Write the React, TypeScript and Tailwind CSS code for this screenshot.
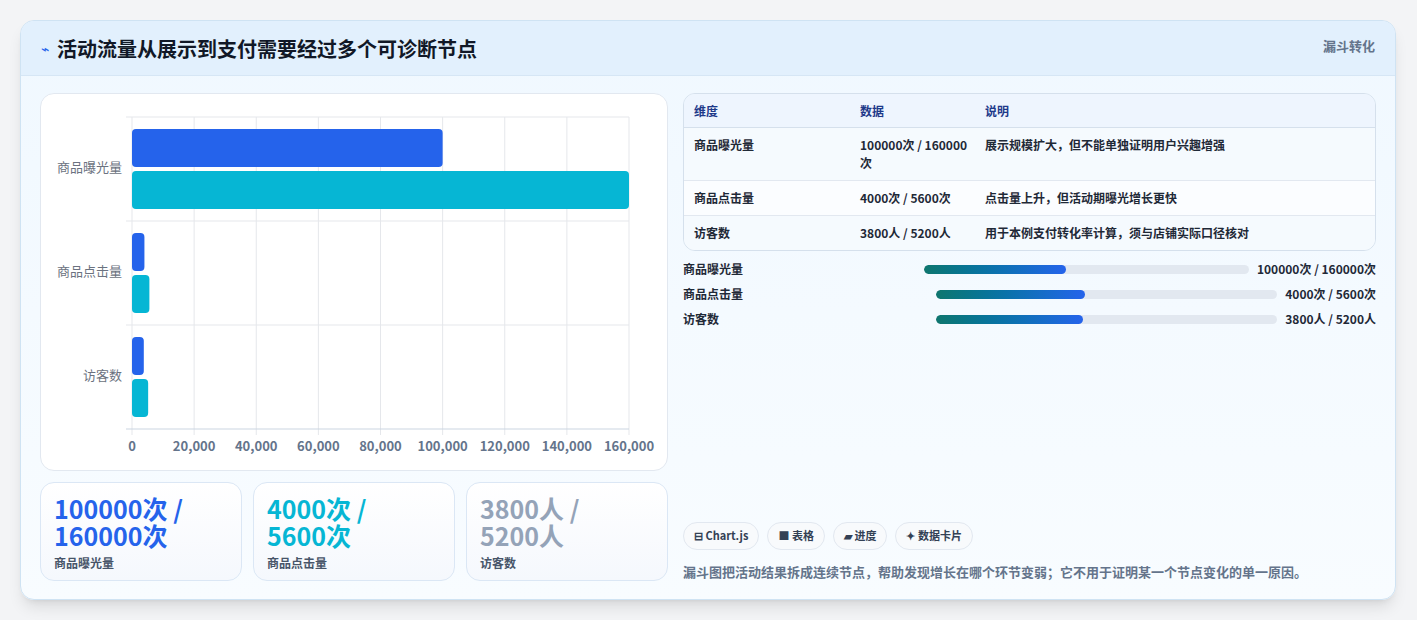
import React from "react";

const F = { fontFamily: '"Noto Sans CJK SC","Noto Sans",sans-serif' };

function Chart() {
  const x0 = 91, w = 497, y0 = 23, h = 312;
  const sx = (v: number) => (v / 160000) * w;
  const cats = [
    { n: "商品曝光量", a: 100000, b: 160000 },
    { n: "商品点击量", a: 4000, b: 5600 },
    { n: "访客数", a: 3800, b: 5200 },
  ];
  const ticks = [0, 20000, 40000, 60000, 80000, 100000, 120000, 140000, 160000];
  return (
    <svg width="627" height="377" className="block">
      {ticks.map((t) => (
        <line key={t} x1={x0 + sx(t)} x2={x0 + sx(t)} y1={y0} y2={y0 + h + 6} stroke="#e5e7eb" />
      ))}
      {[0, 1, 2, 3].map((i) => (
        <line key={i} x1={x0 - 6} x2={x0 + w} y1={y0 + i * 104} y2={y0 + i * 104} stroke={i === 3 ? "#cbd5e1" : "#e5e7eb"} />
      ))}
      {cats.map((c, i) => {
        const top = y0 + i * 104;
        return (
          <g key={c.n}>
            <rect x={x0} y={top + 12} width={sx(c.a)} height={38} rx={4} fill="#2563eb" />
            <rect x={x0} y={top + 54} width={sx(c.b)} height={38} rx={4} fill="#06b6d4" />
            <text x={x0 - 10} y={top + 55} textAnchor="end" fontSize="13" fill="#6b7280" style={F}>{c.n}</text>
          </g>
        );
      })}
      {ticks.map((t) => (
        <text key={t} x={x0 + sx(t)} y={357} textAnchor="middle" fontSize="13" fontWeight="600" fill="#64748b" style={F}>
          {t.toLocaleString("en-US")}
        </text>
      ))}
    </svg>
  );
}

const stats = [
  { v1: "100000次 /", v2: "160000次", l: "商品曝光量", c: "text-[#2563eb]" },
  { v1: "4000次 /", v2: "5600次", l: "商品点击量", c: "text-[#06b6d4]" },
  { v1: "3800人 /", v2: "5200人", l: "访客数", c: "text-[#94a3b8]" },
];

const rows = [
  ["商品曝光量", "100000次 / 160000次", "展示规模扩大，但不能单独证明用户兴趣增强"],
  ["商品点击量", "4000次 / 5600次", "点击量上升，但活动期曝光增长更快"],
  ["访客数", "3800人 / 5200人", "用于本例支付转化率计算，须与店铺实际口径核对"],
];

const bars = [
  ["商品曝光量", "100000次 / 160000次", "43.5%"],
  ["商品点击量", "4000次 / 5600次", "43.5%"],
  ["访客数", "3800人 / 5200人", "43%"],
];

export default function App() {
  return (
    <div className="w-[1417px] h-[620px] bg-[#f3f4f6] p-[20px] pr-[21px]" style={F}>
      <div className="h-[580px] rounded-[14px] border border-[#cfe3f3] bg-gradient-to-b from-[#f0f8ff] to-[#f8fcff] overflow-hidden shadow-lg flex flex-col">
        <div className="h-[55px] shrink-0 bg-[#e2f0fd] border-b border-[#d6e6f5] flex items-start justify-between px-[20px]">
          <div className="flex items-center gap-[8px] h-[55px]">
            <span className="text-[#2563eb] text-[14px]">⌁</span>
            <span className="text-[20px] font-bold text-[#111827]">活动流量从展示到支付需要经过多个可诊断节点</span>
          </div>
          <span className="text-[13px] font-bold text-[#64748b] mt-[15px]">漏斗转化</span>
        </div>
        <div className="flex-1 flex gap-[15px] px-[19px] pt-[17px] pb-[18px]">
          <div className="w-[628px] flex flex-col gap-[11px]">
            <div className="h-[378px] rounded-[14px] border border-[#e2e8f0] bg-white overflow-hidden">
              <Chart />
            </div>
            <div className="flex-1 grid grid-cols-3 gap-[11px]">
              {stats.map((s) => (
                <div key={s.l} className="rounded-[14px] border border-[#dbe7f5] bg-gradient-to-b from-white to-[#f5f8fd] px-[13px] pt-[12px]">
                  <div className={`text-[25px] leading-[27px] font-bold ${s.c}`}>{s.v1}<br />{s.v2}</div>
                  <div className="text-[12px] font-semibold text-[#475569] mt-[5px]">{s.l}</div>
                </div>
              ))}
            </div>
          </div>
          <div className="flex-1 flex flex-col justify-between">
            <div>
              <div className="rounded-[12px] border border-[#d5e0ec] overflow-hidden text-[12px] text-[#1f2937]">
                <div className="grid grid-cols-[166px_125px_1fr] bg-[#eef5fe] h-[34px] items-center px-[10px] font-semibold text-[#1e3a8a] border-b border-[#d5e0ec]">
                  <span>维度</span><span>数据</span><span>说明</span>
                </div>
                {rows.map((r, i) => (
                  <div key={i} className={`grid grid-cols-[166px_125px_1fr] px-[10px] py-[8px] font-semibold ${i < 2 ? "border-b border-[#e2e8f0]" : ""} ${i === 1 ? "bg-[#fbfdff]" : "bg-[#f5fafe]"} ${i === 0 ? "min-h-[52px]" : ""}`}>
                    <span>{r[0]}</span><span className="pr-[6px] leading-[18px]">{r[1]}</span><span>{r[2]}</span>
                  </div>
                ))}
              </div>
              <div className="mt-[9px] flex flex-col gap-[8px] text-[12px] font-semibold text-[#1f2937]">
                {bars.map((b) => (
                  <div key={b[0]} className="grid grid-cols-[1fr_1.39fr_auto] items-center gap-[8px] h-[17px]">
                    <span>{b[0]}</span>
                    <div className="h-[9px] rounded-full bg-[#e2e8f0] overflow-hidden">
                      <div className="h-full rounded-full bg-gradient-to-r from-[#0f766e] to-[#2563eb]" style={{ width: b[2] }} />
                    </div>
                    <span>{b[1]}</span>
                  </div>
                ))}
              </div>
            </div>
            <div>
              <div className="flex gap-[8px]">
                {["⊟ Chart.js", "■ 表格", "▰ 进度", "✦ 数据卡片"].map((t) => (
                  <span key={t} className="h-[28px] px-[10px] rounded-full border border-[#e2e8f0] bg-[#f8fafc] text-[11px] font-semibold text-[#334155] flex items-center">{t}</span>
                ))}
              </div>
              <div className="mt-[12px] text-[13px] font-semibold text-[#64748b]">漏斗图把活动结果拆成连续节点，帮助发现增长在哪个环节变弱；它不用于证明某一个节点变化的单一原因。</div>
            </div>
          </div>
        </div>
      </div>
    </div>
  );
}
